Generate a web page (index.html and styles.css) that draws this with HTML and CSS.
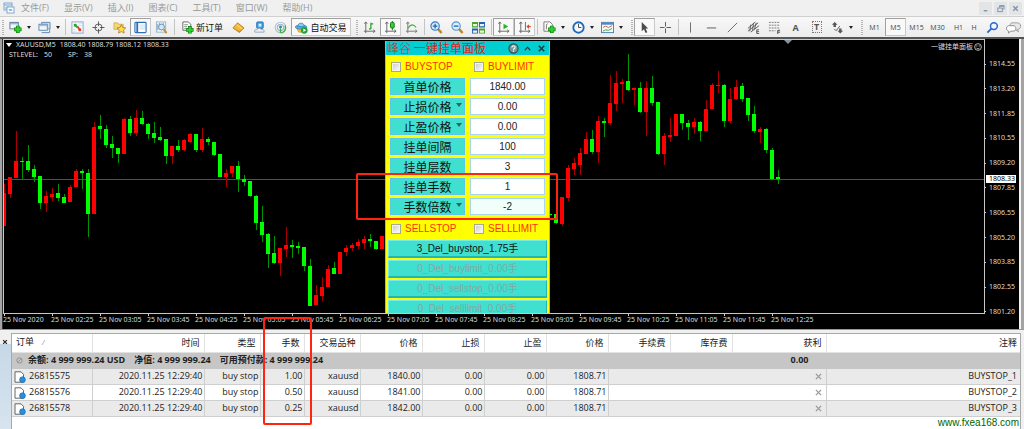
FILE: index.html
```html
<!DOCTYPE html>
<html lang="zh-CN">
<head>
<meta charset="utf-8">
<title>XAUUSD,M5</title>
<link rel="stylesheet" href="styles.css">
</head>
<body>
<div class="app">
  <header class="menubar">
    <svg class="app-icon" viewBox="0 0 12 12"><rect x="1" y="1" width="8" height="7" fill="#e8f2fb" stroke="#7da7d0"/><path d="M1 3h8M3 5v2M5 4v3M7 5v2" stroke="#7da7d0"/><rect x="4" y="5" width="7" height="6" fill="#fff" stroke="#7da7d0"/><path d="M6 7l1 2 1-2 1 2" stroke="#7da7d0" fill="none"/></svg>
    <nav class="menus">
      <a href="#">文件(F)</a><a href="#">显示(V)</a><a href="#">插入(I)</a><a href="#">图表(C)</a><a href="#">工具(T)</a><a href="#">窗口(W)</a><a href="#">帮助(H)</a>
    </nav>
    <div class="window-buttons">
      <button aria-label="最小化"><svg viewBox="0 0 10 10"><path d="M3 7.500h4" stroke="#7c93ab" stroke-width="1.500"/></svg></button>
      <button aria-label="还原"><svg viewBox="0 0 10 10" fill="none" stroke="#7c93ab"><path d="M4 4V2h5v3.500H7"/><path d="M4 2.200h5" stroke-width="1.500"/><rect x="2" y="4.500" width="5" height="4"/></svg></button>
      <button aria-label="关闭"><svg viewBox="0 0 10 10"><path d="M2.500 2.500l5 5M7.500 2.500l-5 5" stroke="#7c93ab" stroke-width="1.500"/></svg></button>
    </div>
  </header>

  <div class="toolbar">
    <div class="group">
      <i class="grip"></i>
      <button class="tool drop" aria-label="新图表"><svg viewBox="0 0 14 14"><rect x="1" y="1.500" width="9" height="7" fill="#f4f8fb" stroke="#5a7894"/><path d="M1 3h9" stroke="#6f9cc8"/><path d="M9.500 5v8M5.500 9h8" stroke="#147a14" stroke-width="4"/><path d="M9.500 5.700v6.600M6.200 9h6.600" stroke="#2fd02f" stroke-width="2.400"/></svg></button>
      <button class="tool drop" aria-label="配置文件"><svg viewBox="0 0 14 14"><path d="M4 4V1.500h9v7h-2" fill="#cfe0f0" stroke="#5f86ad"/><rect x="1" y="3.500" width="9" height="6.500" fill="#eef5fb" stroke="#5f86ad"/><path d="M1.500 5h8" stroke="#8db2d6"/><path d="M4 12.500h8.500V9" fill="none" stroke="#5f86ad"/></svg></button>
      <i class="sep"></i>
      <button class="tool" aria-label="市场报价"><svg viewBox="0 0 14 14"><rect x="1" y="1" width="12" height="12" fill="#fff" stroke="#7aa7d4"/><path d="M3 3h3v3H3z" fill="#22ab22"/><path d="M8 8h3v3H8z" fill="#e03c2c"/><path d="M5 5l2 2" stroke="#22ab22" stroke-width="2"/><path d="M7 6l2 3" stroke="#e03c2c" stroke-width="2"/><path d="M8 3h4M8 5h4M2 9h3M2 11h4" stroke="#c5ddf0"/></svg></button>
      <button class="tool" aria-label="数据窗口"><svg viewBox="0 0 14 14" fill="none" stroke="#555"><circle cx="7" cy="7" r="3.800"/><path d="M7 0.500v5M7 8.500v5M.5 7h5M8.500 7h5"/></svg></button>
      <button class="tool" aria-label="导航"><svg viewBox="0 0 14 14"><path d="M1 2h4l1 1.500h5V9H1z" fill="#f5d774" stroke="#c99a30" stroke-width=".7"/><path d="M9 4l1.500 3 3.300.4-2.400 2.200.6 3.400L9 11.400 6 13l.6-3.400L4.200 7.400l3.300-.4z" fill="#ffdf48" stroke="#a8741c" stroke-width=".8"/></svg></button>
      <button class="tool pressed" aria-label="终端"><svg viewBox="0 0 14 14"><rect x="1" y="1.500" width="12" height="11" rx="1" fill="#fdfeff" stroke="#2d6fb5" stroke-width="1.200"/><path d="M3.500 2v10" stroke="#2d6fb5" stroke-width="2"/><path d="M6 4.500h6M6 6.500h6M6 8.500h6" stroke="#c4dbee"/></svg></button>
      <button class="tool" aria-label="策略测试"><svg viewBox="0 0 14 14"><rect x="1.500" y="1" width="10" height="11" fill="#f3f8fc" stroke="#9ab2c8"/><path d="M3 3v7M5 2v3M9 2v3" stroke="#6f9bc4"/><circle cx="7" cy="6.500" r="3.200" fill="#d2e8fa" stroke="#6089ad"/><path d="M9.500 9l3 4" stroke="#c98c2e" stroke-width="2"/></svg></button>
      <i class="sep"></i>
      <button class="tool order"><svg viewBox="0 0 14 14"><path d="M2 1h6l2.500 2.500V10H2z" fill="#fff" stroke="#666"/><path d="M3.500 4h4M3.500 6h3M3.500 8h2" stroke="#888"/><path d="M9.500 5.500v8M5.500 9.500h8" stroke="#147a14" stroke-width="4"/><path d="M9.500 6.200v6.600M6.200 9.500h6.600" stroke="#2fd02f" stroke-width="2.400"/></svg><span>新订单</span></button>
      <button class="tool" aria-label="MetaEditor"><svg viewBox="0 0 14 14"><path d="M1 7.500L6 2l7 5.500-5 4.800z" fill="#f2b83a" stroke="#a96d10" stroke-width=".8"/><path d="M1 7.500l7 3.300 5-3.300-5 5z" fill="#d08a1c"/><path d="M5 4l6 4.500" stroke="#ffe08a"/></svg></button>
      <button class="tool" aria-label="选项"><svg viewBox="0 0 14 14"><rect x="4" y="1" width="7" height="7" rx="1" fill="#3fa4e8" stroke="#1d6fb5"/><path d="M6 3h3v3H6z" fill="#d8efff"/><path d="M2 12c-1-2 1-3.500 2-2.500C5 7 8.500 7.500 9 9.300c2-.8 3.500.7 3 2.700z" fill="#e9eff5" stroke="#7f97ad" stroke-width=".8"/></svg></button>
      <button class="tool" aria-label="信号"><svg viewBox="0 0 14 14" fill="none"><circle cx="7" cy="7" r="5.700" stroke="#b2c5d0" stroke-width="1.200"/><circle cx="7" cy="7" r="3.500" stroke="#7baac0"/><circle cx="7" cy="6.500" r="1.600" fill="#2d88c8"/><path d="M8 13c4-1 5-5 4-8" stroke="#3cac3c" stroke-width="1.500"/><path d="M7 8v5" stroke="#3cac3c" stroke-width="1.500"/></svg></button>
      <button class="tool auto pressed"><svg viewBox="0 0 14 14"><path d="M2 8h8l1 4H4z" fill="#f2c641" stroke="#b3811c" stroke-width=".6"/><ellipse cx="6.500" cy="6.500" rx="6.200" ry="2.300" fill="#62acd8" stroke="#2a78a8" stroke-width=".7"/><path d="M3 6c0-5 7-5 7 0z" fill="#8accec" stroke="#2a78a8" stroke-width=".7"/><circle cx="10" cy="10" r="3.600" fill="#1ca43a"/><path d="M9 8.200l3 1.800-3 1.800z" fill="#fff"/></svg><span>自动交易</span></button>
    </div>
    <div class="group">
      <i class="grip"></i>
      <button class="tool" aria-label="柱状图"><svg viewBox="0 0 14 14" fill="none"><path d="M3 1v12M1 11h12M1.500 3L3 1l1.500 2M11 9.500l2 1.500-2 1.500" stroke="#666"/><path d="M8.500 2v7M8.500 3h2.500M6.500 8.500h2" stroke="#1fa51f" stroke-width="1.300"/></svg></button>
      <button class="tool pressed" aria-label="蜡烛图"><svg viewBox="0 0 14 14" fill="none"><path d="M3 1v12M1 11h12M1.500 3L3 1l1.500 2M11 9.500l2 1.500-2 1.500" stroke="#666"/><path d="M9 0v10" stroke="#087808"/><rect x="7" y="1.500" width="4" height="6" rx="1" fill="#35d435" stroke="#087808"/></svg></button>
      <button class="tool" aria-label="折线图"><svg viewBox="0 0 14 14" fill="none"><path d="M3 1v12M1 11h12M1.500 3L3 1l1.500 2M11 9.500l2 1.500-2 1.500" stroke="#777"/><path d="M3 8c3-5 6-5 9-1" stroke="#46aa46" stroke-width="1.200"/></svg></button>
      <i class="sep"></i>
      <button class="tool" aria-label="放大"><svg viewBox="0 0 14 14"><path d="M8.500 8.500l4 4.500" stroke="#b7882a" stroke-width="2.600"/><circle cx="5.500" cy="5.500" r="4.500" fill="#d9edfd" stroke="#3278c4" stroke-width="1.200"/><path d="M3 5.500h5M5.500 3v5" stroke="#1c66b4" stroke-width="1.400"/></svg></button>
      <button class="tool" aria-label="缩小"><svg viewBox="0 0 14 14"><path d="M8.500 8.500l4 4.500" stroke="#b7882a" stroke-width="2.600"/><circle cx="5.500" cy="5.500" r="4.500" fill="#d9edfd" stroke="#5a94cc" stroke-width="1.200"/><path d="M3 5.500h5" stroke="#1c66b4" stroke-width="1.400"/></svg></button>
      <button class="tool" aria-label="平铺"><svg viewBox="0 0 14 14"><path d="M0 1h6.500v6H0zM7.500 8H14v5.500H7.500z" fill="#4ca626"/><path d="M7.500 1H14v6H7.500zM0 8h6.500v5.500H0z" fill="#2860b4"/><path d="M1 4.500h4.500M8.500 4.500H13M1 11.500h4.500M8.500 11.500H13" stroke="#e9f3e6" stroke-width="2.500"/></svg></button>
      <i class="sep"></i>
      <button class="tool pressed" aria-label="自动滚动"><svg viewBox="0 0 14 14" fill="none"><path d="M3 1v12M1 11h12M1.500 3L3 1l1.500 2M11 9.500l2 1.500-2 1.500" stroke="#666"/><path d="M7 3v6l5-3z" fill="#25b425"/></svg></button>
      <button class="tool pressed" aria-label="图表平移"><svg viewBox="0 0 14 14" fill="none"><path d="M3 1v12M1 11h12M1.500 3L3 1l1.500 2M11 9.500l2 1.500-2 1.500" stroke="#666"/><path d="M8 1v9" stroke="#3476b8"/><path d="M12 3.500v5L9 6z" fill="#cf4a24"/><path d="M11 6h3" stroke="#cf4a24"/></svg></button>
      <i class="sep"></i>
      <button class="tool drop" aria-label="指标"><svg viewBox="0 0 14 14"><path d="M1 1h6.500L10 3.500V11H1z" fill="#fff" stroke="#777"/><path d="M5 3c-2 0-1 3-1.500 6" stroke="#666" fill="none"/><path d="M9.500 5v8M5.500 9h8" stroke="#147a14" stroke-width="4"/><path d="M9.500 5.700v6.600M6.200 9h6.600" stroke="#2fd02f" stroke-width="2.400"/></svg></button>
      <button class="tool drop" aria-label="时间周期"><svg viewBox="0 0 14 14"><circle cx="7" cy="7" r="5.600" fill="#f3f9ff" stroke="#1d68b8" stroke-width="2"/><path d="M7 3v4h3" fill="none" stroke="#444"/></svg></button>
      <button class="tool drop" aria-label="模板"><svg viewBox="0 0 14 14"><rect x=".5" y="1.500" width="13" height="11" fill="#f6fafc" stroke="#4a7eae"/><path d="M1 3h12" stroke="#4d8bc8" stroke-width="2"/><path d="M2 7l3-1.500L8 7l4-2" fill="none" stroke="#c4643c"/><path d="M2 11l3-1.500L8 10l4-2" fill="none" stroke="#3c9e50"/></svg></button>
    </div>
    <div class="group">
      <i class="grip"></i>
      <button class="tool pressed" aria-label="光标"><svg viewBox="0 0 14 14"><path d="M4 1v10l2.400-2.200L8.200 13l1.800-.8-1.800-4H11z" fill="#4b4b4b"/></svg></button>
      <button class="tool" aria-label="十字线"><svg viewBox="0 0 14 14"><path d="M7 1v5M7 8v5M1 7h5M8 7h5" stroke="#555"/></svg></button>
      <i class="sep"></i>
      <button class="tool" aria-label="垂直线"><svg viewBox="0 0 14 14"><path d="M7 1.500v11" stroke="#666"/></svg></button>
      <button class="tool" aria-label="水平线"><svg viewBox="0 0 14 14"><path d="M2 7.500h10" stroke="#555"/></svg></button>
      <button class="tool" aria-label="趋势线"><svg viewBox="0 0 14 14"><path d="M2 12L12 2" stroke="#666"/></svg></button>
      <button class="tool" aria-label="等距通道"><svg viewBox="0 0 14 14" fill="none" stroke="#555"><path d="M1 8l8-7M1 11l11-9M4 12l9-7M4 4l-1 7M7 2L6 10M10 2L8 9"/><path d="M13 9.500h-2.500v4H13M10.500 11.500H13"/></svg></button>
      <button class="tool" aria-label="斐波纳契"><svg viewBox="0 0 14 14" fill="none" stroke="#777"><path d="M1 1.500h12M1 4.500h12M1 7.500h12M1 10.500h7" stroke-dasharray="2 1"/><path d="M10.500 14v-4H13M10.500 12H13" stroke="#444"/></svg></button>
      <button class="tool letter">A</button>
      <button class="tool letter boxed"><span>T</span></button>
      <button class="tool drop" aria-label="箭头"><svg viewBox="0 0 14 14" fill="#555"><path d="M4 1l3 3H5.300v2.500H2.700V4H1zM10 13.500L7 10.500h1.700V8h2.600v2.500H13z"/><path d="M3.500 8.500l2 2 4-5" fill="none" stroke="#555"/></svg></button>
    </div>
    <div class="group periods">
      <i class="grip"></i>
      <button class="tool">M1</button><button class="tool pressed">M5</button><button class="tool">M15</button><button class="tool">M30</button><button class="tool">H1</button><button class="tool narrow">H</button>
    </div>
    <div class="group tail">
      <button class="tool" aria-label="搜索"><svg viewBox="0 0 14 14" fill="none"><path d="M6 8l-4.500 4.500" stroke="#2d65c8" stroke-width="2"/><circle cx="8.500" cy="5.500" r="3.700" fill="#eff6ff" stroke="#2d65c8" stroke-width="1.600"/></svg></button>
      <button class="tool wide" aria-label="聊天"><svg viewBox="0 0 18 14"><path d="M7 2h6c5 0 5 7 0 7l1.500 2.500L10 9C5 9 4 3 7 2z" fill="#e9e9e9" stroke="#999"/><path d="M4.500 5h4c4 0 4 6 0 6H6l-2.500 2L4 11C0 10 1 5 4.500 5z" fill="#fff" stroke="#888"/></svg></button>
    </div>
  </div>

  <main class="chart-frame">
    <section class="chart">
      <div class="plot">
        <svg class="candles" id="candles"></svg>
        <div class="symbol"><i class="tri"></i><span class="pair">XAUUSD,M5</span><span>1808.40 1808.79 1808.12 1808.33</span></div>
        <div class="levels"><span>STLEVEL:</span><span>50</span><span class="spread">SP:</span><span>38</span></div>
        <div class="expert">一键挂单面板<svg viewBox="0 0 10 10" fill="none" stroke="#ddd"><circle cx="5" cy="5" r="4.200"/><path d="M3 6c.8 1.800 3.200 1.800 4 0M3.500 3v1.500M6.500 3v1.500"/></svg></div>
        <i class="shift"></i>

        <form class="panel">
          <div class="panel-title"><b>峰谷</b><span>一键挂单面板</span>
            <div class="panel-tools">
              <button type="button" aria-label="帮助"><svg viewBox="0 0 12 12"><circle cx="6" cy="6" r="5" fill="#75989c" stroke="#35484a" stroke-width="1.200"/><path d="M4.300 4.800c0-2.400 3.500-2.200 3.400-.2C7.700 6 6 5.900 6 7.300M6 8.300v1.200" fill="none" stroke="#fff" stroke-width="1.200"/></svg></button>
              <button type="button" aria-label="折叠"><svg viewBox="0 0 12 12"><path d="M3 8l3-3.500L9 8" fill="none" stroke="#24363a" stroke-width="1.300"/></svg></button>
              <button type="button" aria-label="关闭"><svg viewBox="0 0 12 12"><path d="M3 3l6 6M9 3L3 9" stroke="#24363a" stroke-width="1.600"/></svg></button>
            </div>
          </div>
          <div class="checks"><label><input type="checkbox">BUYSTOP</label><label><input type="checkbox">BUYLIMIT</label></div>
          <div class="fields">
            <label for="f1">首单价格</label><input id="f1" value="1840.00">
            <label for="f2" class="has-menu">止损价格</label><input id="f2" value="0.00">
            <label for="f3" class="has-menu">止盈价格</label><input id="f3" value="0.00">
            <label for="f4">挂单间隔</label><input id="f4" value="100">
            <label for="f5">挂单层数</label><input id="f5" value="3">
            <label for="f6">挂单手数</label><input id="f6" value="1">
            <label for="f7" class="has-menu">手数倍数</label><input id="f7" class="tinted" value="-2">
          </div>
          <div class="checks"><label><input type="checkbox">SELLSTOP</label><label><input type="checkbox">SELLLIMIT</label></div>
          <div class="actions">
            <button type="button">3_Del_buystop_1.75手</button>
            <button type="button" disabled>0_Del_buylimit_0.00手</button>
            <button type="button" disabled>0_Del_sellstop_0.00手</button>
            <button type="button" disabled>0_Del_selllimit_0.00手</button>
          </div>
        </form>
      </div>
      <div class="prices">
        <span>1814.55</span><span>1813.20</span><span>1811.85</span><span>1810.55</span><span>1809.20</span><span>1807.85</span><span>1806.55</span><span>1805.20</span><span>1803.85</span><span>1802.55</span><span>1801.20</span>
        <b class="last">1808.33</b>
      </div>
      <div class="times">
        <span>25 Nov 2020</span><span>25 Nov 02:25</span><span>25 Nov 03:05</span><span>25 Nov 03:45</span><span>25 Nov 04:25</span><span>25 Nov 05:05</span><span>25 Nov 05:45</span><span>25 Nov 06:25</span><span>25 Nov 07:05</span><span>25 Nov 07:45</span><span>25 Nov 08:25</span><span>25 Nov 09:05</span><span>25 Nov 09:45</span><span>25 Nov 10:25</span><span>25 Nov 11:05</span><span>25 Nov 11:45</span><span>25 Nov 12:25</span>
      </div>
    </section>
  </main>

  <section class="terminal">
    <div class="rail"><button aria-label="关闭终端"><svg viewBox="0 0 8 8"><path d="M1.500 1.500l5 5M6.500 1.500l-5 5" stroke="#222" stroke-width="1.500"/></svg></button></div>
    <div class="orders">
      <table>
        <colgroup><col class="w80"><col class="w112"><col class="w56"><col class="w44"><col class="w56"><col class="w62"><col class="w62"><col class="w62"><col class="w62"><col class="w62"><col class="w62"><col class="w94"><col></colgroup>
        <thead><tr><th class="first">订单<i>∕</i></th><th>时间</th><th>类型</th><th>手数</th><th>交易品种</th><th>价格</th><th>止损</th><th>止盈</th><th>价格</th><th>手续费</th><th>库存费</th><th>获利</th><th>注释</th></tr></thead>
        <tbody>
          <tr class="balance"><td colspan="11"><svg class="dot" viewBox="0 0 8 8"><circle cx="4" cy="4" r="3" fill="#c8c8c8" stroke="#888"/><path d="M2.500 5.500l3-3" stroke="#888"/></svg><span>余额: 4 999 999.24 USD</span><span>净值: 4 999 999.24</span><span>可用预付款: 4 999 999.24</span></td><td class="sum">0.00</td><td></td></tr>
          <tr><td class="first"><svg class="doc" viewBox="0 0 12 12"><path d="M1 .8h6l2.500 2.500v7.900H1z" fill="#fff" stroke="#666"/><circle cx="8.500" cy="8.700" r="2.900" fill="#2590dc" stroke="#1768a8" stroke-width=".6"/></svg>26815575</td><td>2020.11.25 12:29:40</td><td>buy stop</td><td>1.00</td><td>xauusd</td><td>1840.00</td><td>0.00</td><td>0.00</td><td>1808.71</td><td class="open"></td><td class="open"></td><td><button class="del" aria-label="删除"><svg viewBox="0 0 8 8"><path d="M1 1l6 6M7 1L1 7" stroke="#999" stroke-width="1.500"/></svg></button></td><td>BUYSTOP_1</td></tr>
          <tr><td class="first"><svg class="doc" viewBox="0 0 12 12"><path d="M1 .8h6l2.500 2.500v7.900H1z" fill="#fff" stroke="#666"/><circle cx="8.500" cy="8.700" r="2.900" fill="#2590dc" stroke="#1768a8" stroke-width=".6"/></svg>26815576</td><td>2020.11.25 12:29:40</td><td>buy stop</td><td>0.50</td><td>xauusd</td><td>1841.00</td><td>0.00</td><td>0.00</td><td>1808.71</td><td class="open"></td><td class="open"></td><td><button class="del" aria-label="删除"><svg viewBox="0 0 8 8"><path d="M1 1l6 6M7 1L1 7" stroke="#999" stroke-width="1.500"/></svg></button></td><td>BUYSTOP_2</td></tr>
          <tr><td class="first"><svg class="doc" viewBox="0 0 12 12"><path d="M1 .8h6l2.500 2.500v7.900H1z" fill="#fff" stroke="#666"/><circle cx="8.500" cy="8.700" r="2.900" fill="#2590dc" stroke="#1768a8" stroke-width=".6"/></svg>26815578</td><td>2020.11.25 12:29:40</td><td>buy stop</td><td>0.25</td><td>xauusd</td><td>1842.00</td><td>0.00</td><td>0.00</td><td>1808.71</td><td class="open"></td><td class="open"></td><td><button class="del" aria-label="删除"><svg viewBox="0 0 8 8"><path d="M1 1l6 6M7 1L1 7" stroke="#999" stroke-width="1.500"/></svg></button></td><td>BUYSTOP_3</td></tr>
        </tbody>
      </table>
      <a class="site" href="#">www.fxea168.com</a>
    </div>
  </section>
  <i class="mark mark-lots"></i>
  <i class="mark mark-column"></i>
</div>
<script src="chart.js"></script>
</body>
</html>
```
FILE: styles.css
```css
* { box-sizing: border-box; }
body { margin: 0; background: #f0f0f0; font-family: "Open Sans", "Noto Sans CJK SC", sans-serif; font-size: 9px; color: #222; }
button { margin: 0; padding: 0; border: 0; background: none; font: inherit; color: inherit; }
a { text-decoration: none; color: inherit; }
.app { position: relative; display: flex; flex-direction: column; min-height: 100vh; overflow: hidden; }

.menubar { display: flex; align-items: center; height: 17px; padding: 0 2px 0 3px; background: #f0f0f0; border-bottom: 1px solid #d0d0d0; }
.app-icon { width: 12px; height: 12px; margin-right: 6px; }
.menus { display: flex; flex: 1; gap: 15px; color: #999; line-height: 14px; }
.window-buttons { display: flex; gap: 2px; }
.window-buttons button { width: 13px; height: 13px; background: #e2e4e6; }
.window-buttons svg { display: block; width: 9px; height: 9px; margin: auto; }

.toolbar { display: flex; align-items: center; gap: 3px; height: 20px; background: linear-gradient(#f8f8f8, #ececec); white-space: nowrap; }
.group { display: flex; align-items: center; flex: none; }
.grip { flex: none; width: 2px; height: 15px; margin: 0 1px 0 2px; background: repeating-linear-gradient(#b4b4b4 0 1px, #f4f4f4 1px 2px); }
.sep { flex: none; width: 1px; height: 16px; margin: 0 1px 0 2px; background: #c4c4c4; }
.tool { display: flex; flex: none; align-items: center; justify-content: center; width: 21px; height: 18px; color: #444; }
.tool svg { flex: none; width: 13px; height: 13px; }
.tool.pressed { background: #f9f9f9; border: 1px solid #c9c9c9; border-top-color: #a0a0a0; border-left-color: #a0a0a0; }
.drop { width: 29px; gap: 5px; }
.drop::after { content: ""; border: 2px solid transparent; border-top: 3px solid #222; border-bottom: 0; }
.order { width: 52px; gap: 2px; color: #111; }
.auto { width: 60px; gap: 2px; color: #111; }
.letter { font: bold 9px "Open Sans", sans-serif; color: #555; }
.boxed span { width: 10px; line-height: 10px; border: 1px dotted #777; }
.periods .tool { font-size: 7px; }
.periods .narrow { width: 10px; }
.tail { margin-left: auto; padding-right: 3px; }
.tail .wide svg { width: 17px; }

.chart-frame { padding: 2px 3px 0 2px; background: linear-gradient(#555, #555) top / 100% 2px no-repeat, #a4a4a4; }
.chart { display: grid; grid-template: 275px 15px / minmax(0, 1fr) 34px; background: #000; border-left: 1px solid #333; border-right: 2px solid #f4f4f4; color: #ddd; font: 7px/8px "Noto Sans", "Noto Sans CJK SC", sans-serif; }
.plot { position: relative; overflow: hidden; border: 1px solid #c8c8c8; }
.candles { display: block; width: 100%; height: 100%; }
.symbol, .levels { position: absolute; display: flex; align-items: center; white-space: pre; }
.symbol { left: 2px; top: 1px; gap: 4px; }
.levels { left: 5px; top: 11px; gap: 6px; }
.spread { margin-left: 10px; }
.tri { border: 3px solid transparent; border-top: 4px solid #fff; border-bottom: 0; }
.expert { position: absolute; top: 3px; right: 2px; display: flex; align-items: center; gap: 1px; }
.expert svg { width: 8px; height: 8px; }
.shift { position: absolute; left: 780px; top: 0; border: 4px solid transparent; border-top-color: #8593a3; border-bottom: 0; }

.prices { position: relative; grid-row: span 2; display: flex; flex-direction: column; justify-content: space-between; padding: 21px 0 13px; }
.prices span { display: flex; align-items: center; gap: 3px; }
.prices span::before { content: ""; width: 1px; height: 1px; background: #ccc; }
.last { position: absolute; left: 1px; top: 136px; width: 30px; padding-left: 3px; background: #fff; color: #000; font-weight: normal; }
.times { grid-row: 2; display: grid; grid-auto-flow: column; grid-auto-columns: 48px; justify-content: start; }
.times span { position: relative; padding-top: 2px; white-space: nowrap; }
.times span::before { content: ""; position: absolute; left: 1px; top: 0; width: 1px; height: 2px; background: #ccc; }

.panel { position: absolute; left: 381px; top: 1px; width: 165px; background: #ff0; border: 1px solid #40e0d0; border-top: 0; border-bottom: 0; }
.panel-title { display: flex; align-items: center; height: 14px; padding-left: 1px; background: #00ced1; color: #d82820; font: 12px/14px "Noto Sans CJK SC", sans-serif; }
.panel-title b { margin-right: 3px; font-weight: 300; }
.panel-tools { display: flex; flex: 1; justify-content: flex-end; gap: 3px; padding-right: 2px; }
.panel-tools svg { display: block; width: 11px; height: 11px; }
.checks { display: grid; grid-template-columns: 83px 1fr; height: 23px; padding: 5px 5px 0; color: #ff3010; font: 10px/12px "Liberation Sans", sans-serif; }
.checks label { display: flex; align-items: center; gap: 4px; height: 14px; }
.checks input { appearance: none; flex: none; width: 10px; height: 10px; margin: 0; border: 1px solid #a8a890; background: linear-gradient(135deg, #c8c8c8, #fff); box-shadow: inset 0 0 0 1px #f2f2f2; }
.fields { display: grid; grid-template-columns: 1fr 1fr; grid-auto-rows: 17px; gap: 3px 5px; padding: 0 4px; }
.fields label { position: relative; border: 1px solid #58c8e8; background: #40e0d0; color: #111; font: 12px/15px "Noto Sans CJK SC", sans-serif; text-align: center; }
.fields input { min-width: 0; width: 100%; height: 17px; padding: 0; border: 1px solid #a8d4f0; background: #fff; color: #222; font: 10px/15px "Liberation Sans", sans-serif; text-align: center; }
.fields .tinted { background: #f0fffa; }
.has-menu::after { content: ""; position: absolute; right: 2px; top: 4px; border: 3px solid transparent; border-top: 4px solid #286868; border-bottom: 0; }
.fields + .checks { height: 25px; padding-top: 7px; }
.actions { display: grid; grid-auto-rows: 18px; gap: 2px; padding: 0 2px; }
.actions button { border: 1px solid #20b8b0; border-top-color: #70f0e8; border-left-color: #70f0e8; border-bottom-width: 2px; background: #40e0d0; color: #111; font: 10px/14px "Liberation Sans", "Noto Sans CJK SC", sans-serif; }
.actions button:disabled { color: #80aaa4; }

.terminal { display: flex; flex: 1; border-top: 1px solid #999; padding: 3px 3px 0 0; background: #f0f0f0; }
.rail { flex: none; width: 11px; padding: 2px 0 0 2px; background: linear-gradient(#f0f0f0 11px, #c6d8e8 11px, #d8e4ef); }
.rail svg { display: block; width: 6px; height: 6px; }
.orders { position: relative; display: flex; flex: 1; flex-direction: column; min-width: 0; border: 1px solid #a8a8a8; border-bottom: 0; background: #fff; }
table { width: 100%; table-layout: fixed; border-collapse: collapse; line-height: 14px; }
th, td { height: 16px; padding: 0 1px 0 0; border: 1px solid #cfcfcf; border-top: 0; border-left: 0; text-align: right; white-space: nowrap; }
th { height: 18px; padding-right: 4px; border-color: #e2e2e2; font-weight: normal; }
th:last-child, td:last-child { border-right: 0; padding-right: 3px; }
th.first { padding-left: 4px; text-align: left; }
th i { margin-left: 8px; color: #888; font-size: 7px; }
.first { text-align: left; }
.first .doc { width: 12px; height: 12px; margin: 0 3px 0 2px; vertical-align: middle; }
tbody tr:nth-child(even) td { background: #eaeaea; }
.balance td { border-color: #c6c6c6; background: #c6c6c6; font-weight: bold; text-align: left; }
.balance span { margin-right: 9px; }
.balance .dot { width: 7px; height: 7px; margin: 0 5px 0 4px; vertical-align: middle; }
.balance .sum { padding-right: 17px; text-align: right; }
.open { border-right-color: transparent; }
.del { display: block; margin: 0 3px 0 auto; }
.del svg { display: block; width: 7px; height: 7px; }
.site { align-self: flex-end; padding-right: 1px; color: #006400; font: 10px/12px "Liberation Sans", sans-serif; }
.w44 { width: 44px; } .w56 { width: 56px; } .w62 { width: 62px; } .w80 { width: 80px; } .w94 { width: 94px; } .w112 { width: 112px; }

.mark { position: absolute; border: 2px solid #ff2412; border-radius: 2px; pointer-events: none; }
.mark-lots { left: 356px; top: 173px; width: 202px; height: 47px; }
.mark-column { left: 263px; top: 317px; width: 49px; height: 108px; }
```
FILE: chart.js
```js
// Each candle: slot, direction (u/d), high, body top, body bottom, low.
const candles = `0u 184 193 226 226,1u 177 177 194 198,2u 131 161 178 178,3d 157 161 162 179,4d 145 161 170 172,5d 165 169 177 182,
6d 176 176 203 209,7u 191 196 203 212,8u 188 194 197 201,9d 184 193 198 201,10d 194 197 203 203,11u 185 187 202 202,12u 169 171 187 187,
13d 169 171 173 189,14d 169 173 214 237,15u 122 127 214 214,16d 115 126 129 139,17d 125 129 145 148,18d 136 144 148 158,19d 148 148 154 163,
20u 118 119 154 154,21d 116 119 133 136,22u 110 118 133 136,23d 111 118 124 125,24d 123 124 134 139,25d 122 133 138 143,26d 127 137 140 141,
27d 139 139 156 164,28u 146 146 156 164,29d 140 146 150 152,30u 139 140 150 151,31u 133 134 142 143,32d 134 134 150 152,33u 128 139 150 152,
34d 137 139 142 145,35d 142 142 155 156,36d 154 154 177 177,37u 169 173 177 187,38u 166 166 173 177,39d 161 166 179 192,40d 175 179 182 186,
41d 181 181 196 197,42d 195 196 223 230,43d 206 222 235 242,44d 233 234 254 268,45d 236 253 263 264,46u 248 248 263 276,47u 227 245 249 257,
48d 240 245 247 258,49d 242 246 248 254,50d 247 247 266 271,51d 259 266 306 306,52u 285 295 305 305,53u 277 287 296 301,54u 265 269 287 287,
55d 262 268 274 274,56u 252 252 274 274,57u 245 248 252 256,58u 243 245 248 251,59u 239 242 246 249,60u 236 239 243 249,61d 234 239 241 247,
62d 241 241 249 250,63u 236 236 249 249,91d 214 214 215 215,92d 212 214 223 224,93u 197 197 224 226,94u 165 168 198 201,95u 158 163 169 175,
96u 148 153 165 175,97u 132 139 154 154,98d 130 139 152 154,99u 116 121 152 163,100d 118 121 123 137,101u 75 103 123 125,102u 71 83 104 111,
103u 79 82 84 103,104d 54 81 90 91,105u 88 88 90 105,106d 82 88 112 113,107u 81 88 112 136,108d 76 88 103 106,109d 102 102 154 155,
110u 133 136 154 165,111u 118 135 137 142,112u 114 114 136 136,113d 114 114 123 130,114d 120 123 127 140,115u 118 122 127 134,116d 121 122 131 141,
117u 100 109 131 131,118u 83 85 109 109,119u 71 85 86 93,120d 84 85 121 127,121u 88 99 121 123,122u 80 87 99 100,123d 83 86 99 102,
124d 98 98 115 121,125d 106 114 131 133,126u 127 129 132 143,127d 128 129 150 153,128d 148 150 179 180,129d 170 177 179 184`;

const svg = document.getElementById("candles");
const top0 = 40;
const pitch = 6;

function rect(x, y, w, h, fill) {
  const r = document.createElementNS("http://www.w3.org/2000/svg", "rect");
  Object.entries({ x, y, width: w, height: h, fill }).forEach(([k, v]) => r.setAttribute(k, v));
  svg.append(r);
}

rect(0, 179 - top0, "100%", 1, "#46525e");
for (const row of candles.split(",")) {
  const [, slot, dir, h, t, b, l] = row.trim().match(/^(\d+)([ud]) (\d+) (\d+) (\d+) (\d+)$/);
  const x = slot * pitch;
  const up = dir === "u";
  rect(x, h - top0, 1, Math.max(1, l - h), up ? "#a80000" : "#009400");
  rect(x - 2, t - top0, 4, Math.max(1, b - t), up ? "#f00" : "#0f0");
}
```
